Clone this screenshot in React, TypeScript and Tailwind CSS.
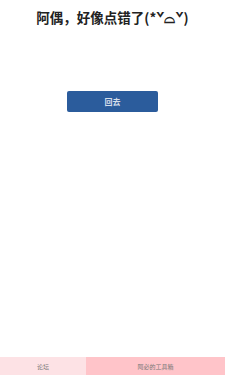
import React from "react";

export default function App() {
  return (
    <div className="w-[225px] h-[375px] bg-white flex flex-col overflow-hidden" style={{ fontFamily: '"Noto Sans CJK SC", "Noto Sans", sans-serif' }}>
      <div className="flex-1 flex flex-col items-center">
        <h1 className="mt-[8px] text-[13.5px] leading-[18px] font-bold text-[#222]">阿偶，好像点错了(*ˇ⌓ˇ)</h1>
        <button className="mt-[65px] w-[91px] h-[21px] rounded-[2px] bg-[#2b5c9c] text-[8px] font-bold text-[#d5deea] flex items-center justify-center">回去</button>
      </div>
      <div className="h-[18px] flex text-[6px] text-[#777]">
        <div className="w-[86px] bg-[#fde2e5] flex items-center justify-center">论坛</div>
        <div className="flex-1 bg-[#ffc4c9] flex items-center justify-center">阿必的工具箱</div>
      </div>
    </div>
  );
}
